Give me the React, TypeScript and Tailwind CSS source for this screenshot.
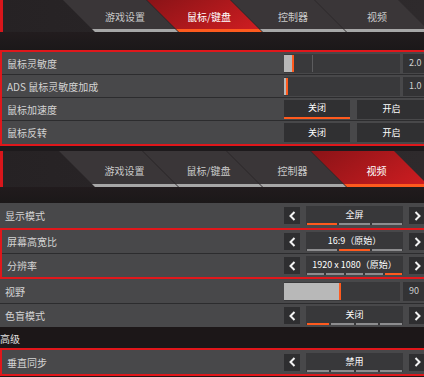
import type { ReactNode } from 'react'

const TABS = ['游戏设置', '鼠标/键盘', '控制器', '视频']

function Tabs({ active, tall }: { active: number; tall?: boolean }) {
  return (
    <div className={`flex overflow-hidden bg-gradient-to-r from-[#262224] to-[#2e2a2c] ${tall ? 'h-[36px]' : 'h-[32px]'}`}>
      <div className="w-[3px] shrink-0 bg-[#d8161b]" />
      <div className={`shrink-0 ${tall ? 'w-[74px]' : 'w-[76px]'}`} />
      {TABS.map((t, i) => (
        <div
          key={t}
          className={`mr-px flex h-full w-[83px] shrink-0 skew-x-[45deg] justify-center border-b-[3px] ${
            i === active
              ? 'border-[#ff5a1e] bg-gradient-to-br from-[#8a1317] to-[#cf1d21]'
              : 'border-[#a7a7a7] bg-[#3a3638]'
          } ${tall ? 'pt-[14px]' : 'pt-[11px]'}`}
        >
          <span
            className={`-skew-x-[45deg] text-[10px] leading-[12px] ${
              i === active ? 'text-white' : 'text-[#c9c9c9]'
            }`}
          >
            {t}
          </span>
        </div>
      ))}
    </div>
  )
}

function Row({ label, children, h = 'h-[23px]', sep = true, open }: { label: string; children?: ReactNode; h?: string; sep?: boolean; open?: boolean }) {
  return (
    <div className={`flex items-center bg-[#48484a] ${h} ${sep ? 'border-b border-[#2c2c2e]' : ''}`}>
      <div className={`shrink-0 text-[10px] text-[#d4d4d4] ${open ? 'w-[284px] pl-[5px]' : 'w-[282px] pl-[5px]'}`}>{label}</div>
      <div className="flex flex-1 items-center">{children}</div>
    </div>
  )
}

function Slider({ fill, value, tick }: { fill: string; value: string; tick?: boolean }) {
  return (
    <div className="flex h-[19px] w-[142px] gap-[3px]">
      <div className="flex w-[116px] items-stretch bg-[#39393b] py-[1px]">
        <div className={`${fill} border-r-2 border-[#ff5a1e] bg-[#b8b8b8]`} />
        {tick && (
          <>
            <div className="w-[18px]" />
            <div className="w-px bg-[#5c5c5e]" />
          </>
        )}
      </div>
      <div className="flex flex-1 items-center bg-[#333335] pl-[6px] text-[9px] text-[#d0d0d0]">{value}</div>
    </div>
  )
}

function Toggle({ on }: { on?: boolean }) {
  return (
    <div className="flex h-[19px] w-[142px] gap-[7px] text-[9px] text-white">
      <div className={`flex w-[66px] items-center justify-center bg-[#303032] ${on ? 'border-b-2 border-[#ff5a1e]' : ''}`}>关闭</div>
      <div className="flex flex-1 items-center justify-center bg-[#303032]">开启</div>
    </div>
  )
}

function Chev({ right }: { right?: boolean }) {
  return (
    <div className="flex h-[17px] w-[16px] shrink-0 items-center justify-center bg-[#2e2e30]">
      <svg width="7" height="10" viewBox="0 0 7 10">
        <path d={right ? 'M1.5 1 L5.5 5 L1.5 9' : 'M5.5 1 L1.5 5 L5.5 9'} fill="none" stroke="#f2f2f2" strokeWidth="2" />
      </svg>
    </div>
  )
}

function Selector({ text, segs, act }: { text: string; segs: number; act: number }) {
  return (
    <div className="flex w-[142px] items-center gap-[6px]">
      <Chev />
      <div className="flex h-[19px] w-[97px] shrink-0 flex-col bg-[#38383a] px-[1px]">
        <div className="flex flex-1 items-center justify-center text-[9px] leading-none text-white">{text}</div>
        <div className="flex h-[2px] gap-[2px]">
          {Array.from({ length: segs }).map((_, i) => (
            <div key={i} className={`flex-1 ${i === act ? 'bg-[#ff5a1e]' : 'bg-[#8d8d8f]'}`} />
          ))}
        </div>
      </div>
      <Chev right />
    </div>
  )
}

export default function App() {
  return (
    <div className="h-[377px] w-[424px] overflow-hidden bg-[#1d1a1c] font-['Noto_Sans_CJK_SC','Noto_Sans',sans-serif]">
      {/* mouse/keyboard */}
      <Tabs active={1} />
      <div className="h-[18px] bg-gradient-to-b from-[#221c1e] to-[#1b1819]" />
      <div className="w-[428px] border-2 border-[#e0171b]">
        <Row label="鼠标灵敏度">
          <Slider fill="w-[10px]" value="2.0" tick />
        </Row>
        <Row label="ADS 鼠标灵敏度加成">
          <Slider fill="w-[4px]" value="1.0" />
        </Row>
        <Row label="鼠标加速度">
          <Toggle on />
        </Row>
        <Row label="鼠标反转" sep={false}>
          <Toggle />
        </Row>
      </div>

      {/* video */}
      <div className="h-[5px] bg-[#1d1a1c]" />
      <Tabs active={3} tall />
      <div className="h-[16px] bg-gradient-to-b from-[#211b1d] to-[#1b1819]" />
      <div className="w-[428px]">
        <Row label="显示模式" h="h-[25px]" sep={false} open>
          <Selector text="全屏" segs={3} act={0} />
        </Row>
      </div>
      <div className="w-[428px] border-2 border-[#e0171b]">
        <Row label="屏幕高宽比" h="h-[24px]">
          <Selector text="16:9（原始）" segs={3} act={1} />
        </Row>
        <Row label="分辨率" h="h-[23px]" sep={false}>
          <Selector text="1920 x 1080（原始）" segs={5} act={4} />
        </Row>
      </div>
      <div className="w-[428px]">
        <Row label="视野" h="h-[25px]" open>
          <div className="flex h-[19px] w-[142px] gap-[3px]">
            <div className="flex w-[116px] bg-[#39393b] py-[1px]">
              <div className="w-[57px] border-r-2 border-[#ff5a1e] bg-[#b8b8b8]" />
            </div>
            <div className="flex flex-1 items-center bg-[#333335] pl-[6px] text-[9px] text-[#d0d0d0]">90</div>
          </div>
        </Row>
        <Row label="色盲模式" h="h-[23px]" sep={false} open>
          <Selector text="关闭" segs={4} act={0} />
        </Row>
      </div>
      <div className="flex h-[21px] items-end bg-[#1c1718] pb-[2px] text-[10px] text-[#e0e0e0]">高级</div>
      <div className="w-[428px] border-2 border-[#e0171b]">
        <Row label="垂直同步" h="h-[24px]" sep={false}>
          <Selector text="禁用" segs={4} act={-1} />
        </Row>
      </div>
    </div>
  )
}
